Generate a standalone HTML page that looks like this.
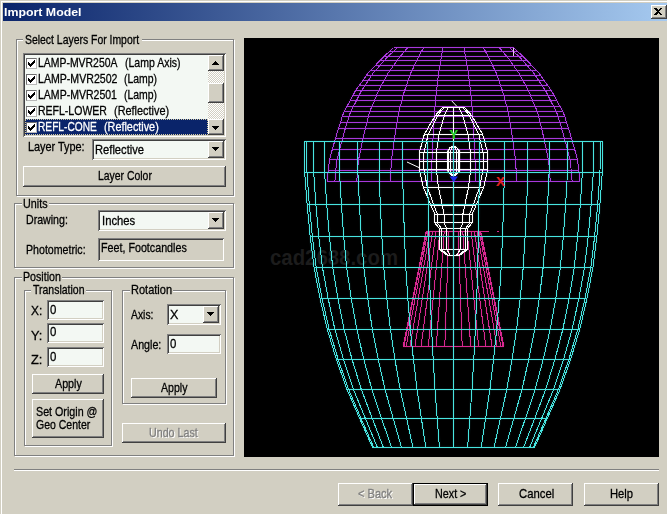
<!DOCTYPE html>
<html lang="en"><head><meta charset="utf-8"><title>Import Model</title><style>
html,body{margin:0;padding:0}
body{width:667px;height:514px;overflow:hidden;background:#d2cfc2;position:relative;font-family:"Liberation Sans",sans-serif;font-size:13px;color:#000}
.abs,.t,.grp,.gap,.btn,.sunk,.flat{position:absolute}
.t{white-space:pre;transform-origin:0 0;display:block;-webkit-text-stroke:0.3px currentColor}
.t.dis{text-shadow:1.25px 1px 0 #fff}
.grp{border:1px solid #808080;box-shadow:1px 1px 0 #fff, inset 1px 1px 0 #fff}
.gap{height:2px;background:#d2cfc2}
.btn{box-sizing:border-box;background:#d2cfc2;box-shadow:inset -1px -1px 0 #404040, inset 1px 1px 0 #fff, inset -2px -2px 0 #808080, inset 2px 2px 0 #d2cfc2}
.btn.def{border:1px solid #000}
.sunk{box-sizing:border-box;box-shadow:inset 1px 1px 0 #808080, inset -1px -1px 0 #fff, inset 2px 2px 0 #404040, inset -2px -2px 0 #d2cfc2}
.flat{box-sizing:border-box;box-shadow:inset 1px 1px 0 #808080, inset -1px -1px 0 #fff}
</style></head><body>
<div class="abs" style="left:1px;top:1px;width:666px;height:1px;background:#fff"></div>
<div class="abs" style="left:1px;top:1px;width:1px;height:513px;background:#fff"></div>
<div class="abs" style="left:3px;top:3px;width:666px;height:18px;background:linear-gradient(90deg,#0a246a,#a6caf0)"></div>
<div class="btn" style="left:651px;top:5px;width:16px;height:14px"></div>
<svg class="abs" style="left:654px;top:8px" width="9" height="8" shape-rendering="crispEdges"><path d="M0 0H2L4 2L6 0H8L5 3.5L8 7H6L4 5L2 7H0L3 3.5Z" fill="#000"/></svg>
<div class="grp" style="left:16px;top:39px;width:216px;height:155px"></div><div class="gap" style="left:22.5px;top:39px;width:119.0px"></div>
<div class="sunk" style="left:23px;top:53px;width:203px;height:84px;background:#f3f8f3"></div>
<div class="abs" style="left:25px;top:119px;width:183px;height:16px;background:#0a246a;outline:1px dotted #d0c8a0;outline-offset:-1px"></div>
<div class="abs" style="left:26px;top:58px;width:11px;height:11px;box-sizing:border-box;border:1px solid;border-color:#707070 #b8b8b8 #b8b8b8 #707070;background:#fff"></div>
<svg class="abs" style="left:28px;top:60px" width="7" height="7" shape-rendering="crispEdges"><path d="M0 2V5L2 7L7 2V-1L2 4Z" fill="#000"/></svg>
<div class="abs" style="left:26px;top:74px;width:11px;height:11px;box-sizing:border-box;border:1px solid;border-color:#707070 #b8b8b8 #b8b8b8 #707070;background:#fff"></div>
<svg class="abs" style="left:28px;top:76px" width="7" height="7" shape-rendering="crispEdges"><path d="M0 2V5L2 7L7 2V-1L2 4Z" fill="#000"/></svg>
<div class="abs" style="left:26px;top:90px;width:11px;height:11px;box-sizing:border-box;border:1px solid;border-color:#707070 #b8b8b8 #b8b8b8 #707070;background:#fff"></div>
<svg class="abs" style="left:28px;top:92px" width="7" height="7" shape-rendering="crispEdges"><path d="M0 2V5L2 7L7 2V-1L2 4Z" fill="#000"/></svg>
<div class="abs" style="left:26px;top:106px;width:11px;height:11px;box-sizing:border-box;border:1px solid;border-color:#707070 #b8b8b8 #b8b8b8 #707070;background:#fff"></div>
<svg class="abs" style="left:28px;top:108px" width="7" height="7" shape-rendering="crispEdges"><path d="M0 2V5L2 7L7 2V-1L2 4Z" fill="#000"/></svg>
<div class="abs" style="left:26px;top:122px;width:11px;height:11px;box-sizing:border-box;border:1px solid;border-color:#707070 #b8b8b8 #b8b8b8 #707070;background:#fff"></div>
<svg class="abs" style="left:28px;top:124px" width="7" height="7" shape-rendering="crispEdges"><path d="M0 2V5L2 7L7 2V-1L2 4Z" fill="#000"/></svg>
<div class="abs" style="left:208px;top:55px;width:16px;height:80px;background:repeating-conic-gradient(#fff 0 25%,#d2cfc2 0 50%) 0 0/2px 2px"></div>
<div class="btn" style="left:208px;top:55px;width:16px;height:16px"></div>
<svg class="abs" style="left:212px;top:61px" width="7" height="4" shape-rendering="crispEdges"><path d="M0 4H7L3.5 0Z" fill="#000"/></svg>
<div class="btn" style="left:208px;top:119px;width:16px;height:16px"></div>
<svg class="abs" style="left:212px;top:126px" width="7" height="4" shape-rendering="crispEdges"><path d="M0 0H7L3.5 4Z" fill="#000"/></svg>
<div class="btn" style="left:208px;top:83px;width:16px;height:20px"></div>
<div class="sunk" style="left:92px;top:139px;width:134px;height:21px;background:#f3f8f3"></div><div class="btn" style="left:208px;top:141px;width:16px;height:17px"></div><svg class="abs" style="left:212px;top:147px" width="7" height="4" shape-rendering="crispEdges"><path d="M0 0H7L3.5 4Z" fill="#000"/></svg>
<div class="btn" style="left:23px;top:166px;width:203px;height:21px"></div>
<div class="grp" style="left:14px;top:203px;width:218px;height:63px"></div><div class="gap" style="left:21.5px;top:203px;width:27.5px"></div>
<div class="sunk" style="left:98px;top:210px;width:128px;height:21px;background:#f3f8f3"></div><div class="btn" style="left:208px;top:212px;width:16px;height:17px"></div><svg class="abs" style="left:212px;top:218px" width="7" height="4" shape-rendering="crispEdges"><path d="M0 0H7L3.5 4Z" fill="#000"/></svg>
<div class="sunk" style="left:98px;top:238px;width:126px;height:23px;background:#d2cfc2"></div>
<div class="grp" style="left:14px;top:277px;width:218px;height:177px"></div><div class="gap" style="left:21.5px;top:277px;width:40.5px"></div>
<div class="grp" style="left:24px;top:290px;width:86px;height:154px"></div><div class="gap" style="left:31.0px;top:290px;width:55.0px"></div>
<div class="grp" style="left:122px;top:290px;width:102px;height:112px"></div><div class="gap" style="left:129.5px;top:290px;width:43.5px"></div>
<div class="sunk" style="left:47px;top:300px;width:57px;height:20px;background:#f3f8f3"></div>
<div class="sunk" style="left:47px;top:323px;width:57px;height:20px;background:#f3f8f3"></div>
<div class="sunk" style="left:47px;top:347px;width:57px;height:20px;background:#f3f8f3"></div>
<div class="btn" style="left:32px;top:374px;width:72px;height:20px"></div>
<div class="btn" style="left:32px;top:399px;width:72px;height:39px"></div>
<div class="sunk" style="left:167px;top:304px;width:54px;height:21px;background:#f3f8f3"></div><div class="btn" style="left:203px;top:306px;width:16px;height:17px"></div><svg class="abs" style="left:207px;top:312px" width="7" height="4" shape-rendering="crispEdges"><path d="M0 0H7L3.5 4Z" fill="#000"/></svg>
<div class="sunk" style="left:167px;top:334px;width:54px;height:20px;background:#f3f8f3"></div>
<div class="btn" style="left:131px;top:378px;width:86px;height:20px"></div>
<div class="btn" style="left:122px;top:423px;width:104px;height:20px"></div>
<div class="abs" style="left:14px;top:469px;width:645px;height:1px;background:#808080"></div>
<div class="abs" style="left:14px;top:470px;width:645px;height:1px;background:#fff"></div>
<div class="btn" style="left:338px;top:483px;width:75px;height:23px"></div>
<div class="btn def" style="left:413px;top:483px;width:75px;height:23px"></div>
<div class="btn" style="left:498px;top:483px;width:75px;height:23px"></div>
<div class="btn" style="left:584px;top:483px;width:75px;height:23px"></div>
<svg class="abs" style="left:244px;top:38px" width="415" height="419" viewBox="244 38 415 419" shape-rendering="crispEdges">
<rect x="244" y="38" width="415" height="419" fill="#000"/>
<text x="270" y="265" font-family="Liberation Sans, sans-serif" font-weight="bold" font-size="22" fill="#1c1c1c" textLength="128" lengthAdjust="spacingAndGlyphs">cad2688.com</text>
<path d="M393.5 47.8H513.5M389.3 51.6H517.7M384.2 56.3H522.8M379.7 60.7H527.3M375.3 65.5H531.7M370.6 70.5H536.4M366.4 75.4H540.6M363.0 80.4H544.0M359.3 85.5H547.7M355.5 90.7H551.5M352.9 95.6H554.1M350.1 100.8H556.9M346.8 106.7H560.2M344.2 111.3H562.8M342.3 116.4H564.7M340.5 122.3H566.5M338.4 128.5H568.6M335.5 138.6H571.5M332.3 149.4H574.7M329.6 159.5H577.4M328.2 170.0H578.8M327.3 181.0H579.7M393.5 47.8L386.0 54.6L380.8 59.5L378.2 62.4L370.3 70.8L367.7 73.4L361.9 82.0L355.6 90.6L354.7 92.2L349.3 102.4L344.2 111.2L342.3 116.4L340.5 122.3L338.4 128.5L335.5 138.5L332.3 149.4L329.6 159.5L328.2 170.0L327.3 181.0M397.1 47.8L390.1 54.6L385.2 59.5L382.7 62.4L375.3 70.8L372.9 73.4L367.4 82.0L361.5 90.6L360.7 92.2L355.6 102.4L350.8 111.2L349.0 116.4L347.3 122.3L345.3 128.5L342.6 138.5L339.6 149.4L337.1 159.5L335.8 170.0L334.9 181.0M407.5 47.8L401.8 54.6L397.8 59.5L395.8 62.4L389.8 70.8L387.8 73.4L383.3 82.0L378.5 90.6L377.8 92.2L373.7 102.4L369.8 111.2L368.3 116.4L366.9 122.3L365.3 128.5L363.1 138.5L360.7 149.4L358.6 159.5L357.5 170.0L356.8 181.0M423.5 47.8L419.8 54.6L417.1 59.5L415.9 62.4L411.9 70.8L410.6 73.4L407.7 82.0L404.6 90.6L404.1 92.2L401.4 102.4L398.9 111.2L397.9 116.4L397.0 122.3L395.9 128.5L394.5 138.5L392.9 149.4L391.6 159.5L390.9 170.0L390.4 181.0M443.1 47.8L441.8 54.6L440.9 59.5L440.4 62.4L439.1 70.8L438.6 73.4L437.6 82.0L436.5 90.6L436.3 92.2L435.4 102.4L434.5 111.2L434.2 116.4L433.9 122.3L433.5 128.5L433.0 138.5L432.5 149.4L432.0 159.5L431.7 170.0L431.6 181.0M463.9 47.8L465.2 54.6L466.1 59.5L466.6 62.4L467.9 70.8L468.4 73.4L469.4 82.0L470.5 90.6L470.7 92.2L471.6 102.4L472.5 111.2L472.8 116.4L473.1 122.3L473.5 128.5L474.0 138.5L474.5 149.4L475.0 159.5L475.3 170.0L475.4 181.0M483.5 47.8L487.2 54.6L489.9 59.5L491.1 62.4L495.1 70.8L496.4 73.4L499.3 82.0L502.4 90.6L502.9 92.2L505.6 102.4L508.1 111.2L509.1 116.4L510.0 122.3L511.1 128.5L512.5 138.5L514.1 149.4L515.5 159.5L516.1 170.0L516.6 181.0M499.5 47.8L505.2 54.6L509.2 59.5L511.2 62.4L517.2 70.8L519.2 73.4L523.7 82.0L528.5 90.6L529.2 92.2L533.3 102.4L537.2 111.2L538.7 116.4L540.1 122.3L541.7 128.5L543.9 138.5L546.3 149.4L548.4 159.5L549.5 170.0L550.2 181.0M509.9 47.8L516.9 54.6L521.8 59.5L524.3 62.4L531.7 70.8L534.1 73.4L539.6 82.0L545.5 90.6L546.3 92.2L551.4 102.4L556.2 111.2L558.0 116.4L559.7 122.3L561.7 128.5L564.4 138.5L567.4 149.4L569.9 159.5L571.2 170.0L572.1 181.0M513.5 47.8L521.0 54.6L526.2 59.5L528.8 62.4L536.7 70.8L539.3 73.4L545.1 82.0L551.4 90.6L552.3 92.2L557.7 102.4L562.8 111.2L564.7 116.4L566.5 122.3L568.6 128.5L571.5 138.5L574.7 149.4L577.4 159.5L578.8 170.0L579.7 181.0" stroke="#a838dc" stroke-width="3" stroke-opacity="0.07" fill="none" shape-rendering="auto"/><path d="M393.5 47.8H513.5M389.3 51.6H517.7M384.2 56.3H522.8M379.7 60.7H527.3M375.3 65.5H531.7M370.6 70.5H536.4M366.4 75.4H540.6M363.0 80.4H544.0M359.3 85.5H547.7M355.5 90.7H551.5M352.9 95.6H554.1M350.1 100.8H556.9M346.8 106.7H560.2M344.2 111.3H562.8M342.3 116.4H564.7M340.5 122.3H566.5M338.4 128.5H568.6M335.5 138.6H571.5M332.3 149.4H574.7M329.6 159.5H577.4M328.2 170.0H578.8M327.3 181.0H579.7M393.5 47.8L386.0 54.6L380.8 59.5L378.2 62.4L370.3 70.8L367.7 73.4L361.9 82.0L355.6 90.6L354.7 92.2L349.3 102.4L344.2 111.2L342.3 116.4L340.5 122.3L338.4 128.5L335.5 138.5L332.3 149.4L329.6 159.5L328.2 170.0L327.3 181.0M397.1 47.8L390.1 54.6L385.2 59.5L382.7 62.4L375.3 70.8L372.9 73.4L367.4 82.0L361.5 90.6L360.7 92.2L355.6 102.4L350.8 111.2L349.0 116.4L347.3 122.3L345.3 128.5L342.6 138.5L339.6 149.4L337.1 159.5L335.8 170.0L334.9 181.0M407.5 47.8L401.8 54.6L397.8 59.5L395.8 62.4L389.8 70.8L387.8 73.4L383.3 82.0L378.5 90.6L377.8 92.2L373.7 102.4L369.8 111.2L368.3 116.4L366.9 122.3L365.3 128.5L363.1 138.5L360.7 149.4L358.6 159.5L357.5 170.0L356.8 181.0M423.5 47.8L419.8 54.6L417.1 59.5L415.9 62.4L411.9 70.8L410.6 73.4L407.7 82.0L404.6 90.6L404.1 92.2L401.4 102.4L398.9 111.2L397.9 116.4L397.0 122.3L395.9 128.5L394.5 138.5L392.9 149.4L391.6 159.5L390.9 170.0L390.4 181.0M443.1 47.8L441.8 54.6L440.9 59.5L440.4 62.4L439.1 70.8L438.6 73.4L437.6 82.0L436.5 90.6L436.3 92.2L435.4 102.4L434.5 111.2L434.2 116.4L433.9 122.3L433.5 128.5L433.0 138.5L432.5 149.4L432.0 159.5L431.7 170.0L431.6 181.0M463.9 47.8L465.2 54.6L466.1 59.5L466.6 62.4L467.9 70.8L468.4 73.4L469.4 82.0L470.5 90.6L470.7 92.2L471.6 102.4L472.5 111.2L472.8 116.4L473.1 122.3L473.5 128.5L474.0 138.5L474.5 149.4L475.0 159.5L475.3 170.0L475.4 181.0M483.5 47.8L487.2 54.6L489.9 59.5L491.1 62.4L495.1 70.8L496.4 73.4L499.3 82.0L502.4 90.6L502.9 92.2L505.6 102.4L508.1 111.2L509.1 116.4L510.0 122.3L511.1 128.5L512.5 138.5L514.1 149.4L515.5 159.5L516.1 170.0L516.6 181.0M499.5 47.8L505.2 54.6L509.2 59.5L511.2 62.4L517.2 70.8L519.2 73.4L523.7 82.0L528.5 90.6L529.2 92.2L533.3 102.4L537.2 111.2L538.7 116.4L540.1 122.3L541.7 128.5L543.9 138.5L546.3 149.4L548.4 159.5L549.5 170.0L550.2 181.0M509.9 47.8L516.9 54.6L521.8 59.5L524.3 62.4L531.7 70.8L534.1 73.4L539.6 82.0L545.5 90.6L546.3 92.2L551.4 102.4L556.2 111.2L558.0 116.4L559.7 122.3L561.7 128.5L564.4 138.5L567.4 149.4L569.9 159.5L571.2 170.0L572.1 181.0M513.5 47.8L521.0 54.6L526.2 59.5L528.8 62.4L536.7 70.8L539.3 73.4L545.1 82.0L551.4 90.6L552.3 92.2L557.7 102.4L562.8 111.2L564.7 116.4L566.5 122.3L568.6 128.5L571.5 138.5L574.7 149.4L577.4 159.5L578.8 170.0L579.7 181.0" stroke="#a838dc" stroke-width="1" fill="none"/>
<path d="M513.5 48V56" stroke="#e8c8f0" stroke-width="1"/>
<path d="M426.2 231.5H480.8M403.1 346.5H503.9M426.2 231.5L403.1 346.5M426.6 231.5L403.9 346.5M427.8 231.5L406.1 346.5M429.9 231.5L409.9 346.5M432.6 231.5L414.9 346.5M436.0 231.5L421.1 346.5M439.9 231.5L428.3 346.5M444.2 231.5L436.3 346.5M448.8 231.5L444.8 346.5M453.5 231.5L453.5 346.5M458.2 231.5L462.2 346.5M462.8 231.5L470.7 346.5M467.1 231.5L478.7 346.5M471.0 231.5L485.9 346.5M474.4 231.5L492.1 346.5M477.1 231.5L497.1 346.5M479.2 231.5L500.9 346.5M480.4 231.5L503.1 346.5M480.8 231.5L503.9 346.5" stroke="#d82890" stroke-width="3" stroke-opacity="0.07" fill="none" shape-rendering="auto"/><path d="M426.2 231.5H480.8M403.1 346.5H503.9M426.2 231.5L403.1 346.5M426.6 231.5L403.9 346.5M427.8 231.5L406.1 346.5M429.9 231.5L409.9 346.5M432.6 231.5L414.9 346.5M436.0 231.5L421.1 346.5M439.9 231.5L428.3 346.5M444.2 231.5L436.3 346.5M448.8 231.5L444.8 346.5M453.5 231.5L453.5 346.5M458.2 231.5L462.2 346.5M462.8 231.5L470.7 346.5M467.1 231.5L478.7 346.5M471.0 231.5L485.9 346.5M474.4 231.5L492.1 346.5M477.1 231.5L497.1 346.5M479.2 231.5L500.9 346.5M480.4 231.5L503.1 346.5M480.8 231.5L503.9 346.5" stroke="#d82890" stroke-width="1" fill="none"/>
<path d="M481 231.5H489M497 231.5H499" stroke="#d82890" stroke-width="1"/>
<path d="M442.8 107.3H464.2M435.3 115.5H471.7M424.3 134.5H482.7M419.3 152.8H487.7M419.3 161.2H487.7M419.3 169.5H487.7M423.3 187.1H483.7M431.2 205.9H475.8M434.8 214.1H472.2M434.8 222.9H472.2M439.2 228.1H467.8M439.2 249.2H467.8M447.7 255.6H459.3M442.8 107.3L435.3 115.5L424.3 134.5L419.3 152.8L419.3 161.2L419.3 169.5L423.3 187.1L431.2 205.9L434.8 214.1L434.8 222.9L439.2 228.1L439.2 249.2L447.7 255.6M444.2 107.3L437.7 115.5L428.2 134.5L423.9 152.8L423.9 161.2L423.9 169.5L427.3 187.1L434.2 205.9L437.3 214.1L437.3 222.9L441.1 228.1L441.1 249.2L448.5 255.6M448.1 107.3L444.4 115.5L438.9 134.5L436.4 152.8L436.4 161.2L436.4 169.5L438.4 187.1L442.4 205.9L444.1 214.1L444.1 222.9L446.4 228.1L446.4 249.2L450.6 255.6M453.5 107.3L453.5 115.5L453.5 134.5L453.5 152.8L453.5 161.2L453.5 169.5L453.5 187.1L453.5 205.9L453.5 214.1L453.5 222.9L453.5 228.1L453.5 249.2L453.5 255.6M458.9 107.3L462.6 115.5L468.1 134.5L470.6 152.8L470.6 161.2L470.6 169.5L468.6 187.1L464.6 205.9L462.9 214.1L462.9 222.9L460.6 228.1L460.6 249.2L456.4 255.6M462.8 107.3L469.3 115.5L478.8 134.5L483.1 152.8L483.1 161.2L483.1 169.5L479.7 187.1L472.8 205.9L469.7 214.1L469.7 222.9L465.9 228.1L465.9 249.2L458.5 255.6M464.2 107.3L471.7 115.5L482.7 134.5L487.7 152.8L487.7 161.2L487.7 169.5L483.7 187.1L475.8 205.9L472.2 214.1L472.2 222.9L467.8 228.1L467.8 249.2L459.3 255.6" stroke="#ffffff" stroke-width="3" stroke-opacity="0.07" fill="none" shape-rendering="auto"/><path d="M442.8 107.3H464.2M435.3 115.5H471.7M424.3 134.5H482.7M419.3 152.8H487.7M419.3 161.2H487.7M419.3 169.5H487.7M423.3 187.1H483.7M431.2 205.9H475.8M434.8 214.1H472.2M434.8 222.9H472.2M439.2 228.1H467.8M439.2 249.2H467.8M447.7 255.6H459.3M442.8 107.3L435.3 115.5L424.3 134.5L419.3 152.8L419.3 161.2L419.3 169.5L423.3 187.1L431.2 205.9L434.8 214.1L434.8 222.9L439.2 228.1L439.2 249.2L447.7 255.6M444.2 107.3L437.7 115.5L428.2 134.5L423.9 152.8L423.9 161.2L423.9 169.5L427.3 187.1L434.2 205.9L437.3 214.1L437.3 222.9L441.1 228.1L441.1 249.2L448.5 255.6M448.1 107.3L444.4 115.5L438.9 134.5L436.4 152.8L436.4 161.2L436.4 169.5L438.4 187.1L442.4 205.9L444.1 214.1L444.1 222.9L446.4 228.1L446.4 249.2L450.6 255.6M453.5 107.3L453.5 115.5L453.5 134.5L453.5 152.8L453.5 161.2L453.5 169.5L453.5 187.1L453.5 205.9L453.5 214.1L453.5 222.9L453.5 228.1L453.5 249.2L453.5 255.6M458.9 107.3L462.6 115.5L468.1 134.5L470.6 152.8L470.6 161.2L470.6 169.5L468.6 187.1L464.6 205.9L462.9 214.1L462.9 222.9L460.6 228.1L460.6 249.2L456.4 255.6M462.8 107.3L469.3 115.5L478.8 134.5L483.1 152.8L483.1 161.2L483.1 169.5L479.7 187.1L472.8 205.9L469.7 214.1L469.7 222.9L465.9 228.1L465.9 249.2L458.5 255.6M464.2 107.3L471.7 115.5L482.7 134.5L487.7 152.8L487.7 161.2L487.7 169.5L483.7 187.1L475.8 205.9L472.2 214.1L472.2 222.9L467.8 228.1L467.8 249.2L459.3 255.6" stroke="#ffffff" stroke-width="1" fill="none"/>
<path d="M451.7 100.8L456.9 106.4M407 162L419.3 167.7" stroke="#fff" stroke-width="1" shape-rendering="auto"/>
<path d="M452.0 146.5H455.0M452.0 175.3H455.0M452.0 146.5L449.2 148.3L447.9 151.0L447.9 171.0L449.2 173.6L452.0 175.3M452.2 146.5L449.8 148.3L448.7 151.0L448.7 171.0L449.8 173.6L452.2 175.3M452.8 146.5L451.4 148.3L450.7 151.0L450.7 171.0L451.4 173.6L452.8 175.3M453.5 146.5L453.5 148.3L453.5 151.0L453.5 171.0L453.5 173.6L453.5 175.3M454.2 146.5L455.6 148.3L456.3 151.0L456.3 171.0L455.6 173.6L454.2 175.3M454.8 146.5L457.2 148.3L458.3 151.0L458.3 171.0L457.2 173.6L454.8 175.3M455.0 146.5L457.8 148.3L459.1 151.0L459.1 171.0L457.8 173.6L455.0 175.3" stroke="#ffffff" stroke-width="3" stroke-opacity="0.07" fill="none" shape-rendering="auto"/><path d="M452.0 146.5H455.0M452.0 175.3H455.0M452.0 146.5L449.2 148.3L447.9 151.0L447.9 171.0L449.2 173.6L452.0 175.3M452.2 146.5L449.8 148.3L448.7 151.0L448.7 171.0L449.8 173.6L452.2 175.3M452.8 146.5L451.4 148.3L450.7 151.0L450.7 171.0L451.4 173.6L452.8 175.3M453.5 146.5L453.5 148.3L453.5 151.0L453.5 171.0L453.5 173.6L453.5 175.3M454.2 146.5L455.6 148.3L456.3 151.0L456.3 171.0L455.6 173.6L454.2 175.3M454.8 146.5L457.2 148.3L458.3 151.0L458.3 171.0L457.2 173.6L454.8 175.3M455.0 146.5L457.8 148.3L459.1 151.0L459.1 171.0L457.8 173.6L455.0 175.3" stroke="#ffffff" stroke-width="1" fill="none"/>
<path d="M448.2 150V172M459.4 150V172" stroke="#fff" stroke-width="1.4" shape-rendering="auto"/>
<path d="M304.5 141.5H602.5M304.7 172.4H602.3M307.1 204.6H599.9M310.2 236.7H596.8M314.1 267.7H592.9M320.0 298.3H587.0M327.2 329.1H579.8M336.3 359.2H570.7M347.0 389.4H560.0M359.7 418.5H547.3M372.4 447.2H534.6M304.5 141.5L304.7 172.4L307.1 204.6L310.2 236.7L314.1 267.7L320.0 298.3L327.2 329.1L336.3 359.2L347.0 389.4L359.7 418.5L372.4 447.2M306.8 141.5L307.0 172.4L309.3 204.6L312.4 236.7L316.2 267.7L322.0 298.3L329.1 329.1L338.1 359.2L348.6 389.4L361.1 418.5L373.6 447.2M313.5 141.5L313.7 172.4L315.9 204.6L318.8 236.7L322.5 267.7L328.1 298.3L334.8 329.1L343.4 359.2L353.4 389.4L365.4 418.5L377.3 447.2M324.5 141.5L324.6 172.4L326.7 204.6L329.4 236.7L332.8 267.7L337.9 298.3L344.1 329.1L352.0 359.2L361.3 389.4L372.3 418.5L383.3 447.2M339.4 141.5L339.5 172.4L341.4 204.6L343.7 236.7L346.7 267.7L351.2 298.3L356.8 329.1L363.7 359.2L371.9 389.4L381.6 418.5L391.4 447.2M357.7 141.5L357.9 172.4L359.4 204.6L361.4 236.7L363.9 267.7L367.7 298.3L372.3 329.1L378.2 359.2L385.0 389.4L393.2 418.5L401.4 447.2M379.0 141.5L379.1 172.4L380.3 204.6L381.9 236.7L383.8 267.7L386.8 298.3L390.4 329.1L394.9 359.2L400.2 389.4L406.6 418.5L412.9 447.2M402.5 141.5L402.6 172.4L403.4 204.6L404.5 236.7L405.8 267.7L407.8 298.3L410.3 329.1L413.4 359.2L417.1 389.4L421.4 418.5L425.8 447.2M427.6 141.5L427.7 172.4L428.1 204.6L428.6 236.7L429.3 267.7L430.3 298.3L431.6 329.1L433.2 359.2L435.0 389.4L437.2 418.5L439.4 447.2M453.5 141.5L453.5 172.4L453.5 204.6L453.5 236.7L453.5 267.7L453.5 298.3L453.5 329.1L453.5 359.2L453.5 389.4L453.5 418.5L453.5 447.2M479.4 141.5L479.3 172.4L478.9 204.6L478.4 236.7L477.7 267.7L476.7 298.3L475.4 329.1L473.8 359.2L472.0 389.4L469.8 418.5L467.6 447.2M504.5 141.5L504.4 172.4L503.6 204.6L502.5 236.7L501.2 267.7L499.2 298.3L496.7 329.1L493.6 359.2L489.9 389.4L485.6 418.5L481.2 447.2M528.0 141.5L527.9 172.4L526.7 204.6L525.1 236.7L523.2 267.7L520.2 298.3L516.6 329.1L512.1 359.2L506.8 389.4L500.4 418.5L494.1 447.2M549.3 141.5L549.1 172.4L547.6 204.6L545.6 236.7L543.1 267.7L539.3 298.3L534.7 329.1L528.8 359.2L522.0 389.4L513.8 418.5L505.6 447.2M567.6 141.5L567.5 172.4L565.6 204.6L563.3 236.7L560.3 267.7L555.8 298.3L550.2 329.1L543.3 359.2L535.1 389.4L525.4 418.5L515.6 447.2M582.5 141.5L582.4 172.4L580.3 204.6L577.6 236.7L574.2 267.7L569.1 298.3L562.9 329.1L555.0 359.2L545.7 389.4L534.7 418.5L523.7 447.2M593.5 141.5L593.3 172.4L591.1 204.6L588.2 236.7L584.5 267.7L578.9 298.3L572.2 329.1L563.6 359.2L553.6 389.4L541.6 418.5L529.7 447.2M600.2 141.5L600.0 172.4L597.7 204.6L594.6 236.7L590.8 267.7L585.0 298.3L577.9 329.1L568.9 359.2L558.4 389.4L545.9 418.5L533.4 447.2M602.5 141.5L602.3 172.4L599.9 204.6L596.8 236.7L592.9 267.7L587.0 298.3L579.8 329.1L570.7 359.2L560.0 389.4L547.3 418.5L534.6 447.2" stroke="#48e4e0" stroke-width="3" stroke-opacity="0.07" fill="none" shape-rendering="auto"/><path d="M304.5 141.5H602.5M304.7 172.4H602.3M307.1 204.6H599.9M310.2 236.7H596.8M314.1 267.7H592.9M320.0 298.3H587.0M327.2 329.1H579.8M336.3 359.2H570.7M347.0 389.4H560.0M359.7 418.5H547.3M372.4 447.2H534.6M304.5 141.5L304.7 172.4L307.1 204.6L310.2 236.7L314.1 267.7L320.0 298.3L327.2 329.1L336.3 359.2L347.0 389.4L359.7 418.5L372.4 447.2M306.8 141.5L307.0 172.4L309.3 204.6L312.4 236.7L316.2 267.7L322.0 298.3L329.1 329.1L338.1 359.2L348.6 389.4L361.1 418.5L373.6 447.2M313.5 141.5L313.7 172.4L315.9 204.6L318.8 236.7L322.5 267.7L328.1 298.3L334.8 329.1L343.4 359.2L353.4 389.4L365.4 418.5L377.3 447.2M324.5 141.5L324.6 172.4L326.7 204.6L329.4 236.7L332.8 267.7L337.9 298.3L344.1 329.1L352.0 359.2L361.3 389.4L372.3 418.5L383.3 447.2M339.4 141.5L339.5 172.4L341.4 204.6L343.7 236.7L346.7 267.7L351.2 298.3L356.8 329.1L363.7 359.2L371.9 389.4L381.6 418.5L391.4 447.2M357.7 141.5L357.9 172.4L359.4 204.6L361.4 236.7L363.9 267.7L367.7 298.3L372.3 329.1L378.2 359.2L385.0 389.4L393.2 418.5L401.4 447.2M379.0 141.5L379.1 172.4L380.3 204.6L381.9 236.7L383.8 267.7L386.8 298.3L390.4 329.1L394.9 359.2L400.2 389.4L406.6 418.5L412.9 447.2M402.5 141.5L402.6 172.4L403.4 204.6L404.5 236.7L405.8 267.7L407.8 298.3L410.3 329.1L413.4 359.2L417.1 389.4L421.4 418.5L425.8 447.2M427.6 141.5L427.7 172.4L428.1 204.6L428.6 236.7L429.3 267.7L430.3 298.3L431.6 329.1L433.2 359.2L435.0 389.4L437.2 418.5L439.4 447.2M453.5 141.5L453.5 172.4L453.5 204.6L453.5 236.7L453.5 267.7L453.5 298.3L453.5 329.1L453.5 359.2L453.5 389.4L453.5 418.5L453.5 447.2M479.4 141.5L479.3 172.4L478.9 204.6L478.4 236.7L477.7 267.7L476.7 298.3L475.4 329.1L473.8 359.2L472.0 389.4L469.8 418.5L467.6 447.2M504.5 141.5L504.4 172.4L503.6 204.6L502.5 236.7L501.2 267.7L499.2 298.3L496.7 329.1L493.6 359.2L489.9 389.4L485.6 418.5L481.2 447.2M528.0 141.5L527.9 172.4L526.7 204.6L525.1 236.7L523.2 267.7L520.2 298.3L516.6 329.1L512.1 359.2L506.8 389.4L500.4 418.5L494.1 447.2M549.3 141.5L549.1 172.4L547.6 204.6L545.6 236.7L543.1 267.7L539.3 298.3L534.7 329.1L528.8 359.2L522.0 389.4L513.8 418.5L505.6 447.2M567.6 141.5L567.5 172.4L565.6 204.6L563.3 236.7L560.3 267.7L555.8 298.3L550.2 329.1L543.3 359.2L535.1 389.4L525.4 418.5L515.6 447.2M582.5 141.5L582.4 172.4L580.3 204.6L577.6 236.7L574.2 267.7L569.1 298.3L562.9 329.1L555.0 359.2L545.7 389.4L534.7 418.5L523.7 447.2M593.5 141.5L593.3 172.4L591.1 204.6L588.2 236.7L584.5 267.7L578.9 298.3L572.2 329.1L563.6 359.2L553.6 389.4L541.6 418.5L529.7 447.2M600.2 141.5L600.0 172.4L597.7 204.6L594.6 236.7L590.8 267.7L585.0 298.3L577.9 329.1L568.9 359.2L558.4 389.4L545.9 418.5L533.4 447.2M602.5 141.5L602.3 172.4L599.9 204.6L596.8 236.7L592.9 267.7L587.0 298.3L579.8 329.1L570.7 359.2L560.0 389.4L547.3 418.5L534.6 447.2" stroke="#48e4e0" stroke-width="1" fill="none"/>
<path d="M449.5 176.5H458L453.8 182Z" fill="#1828e8" shape-rendering="auto"/>
<text x="449.6" y="139" font-family="Liberation Mono, monospace" font-weight="bold" font-size="13" fill="#28d028" textLength="8.5" lengthAdjust="spacingAndGlyphs">Y</text>
<text x="496" y="186" font-family="Liberation Mono, monospace" font-weight="bold" font-size="13" fill="#e02020" textLength="9" lengthAdjust="spacingAndGlyphs">X</text>
</svg>
<div id="txt" class="abs" style="left:0;top:0;width:667px;height:514px;will-change:transform">
<span class="t" style="left:4.19px;top:5.52px;font-size:11.5px;line-height:13px;transform:scaleX(1.0742);color:#fff;font-weight:bold;-webkit-text-stroke:0;">Import Model</span>
<span class="t" style="left:25.00px;top:32.00px;font-size:13.0px;line-height:15px;transform:scaleX(0.8014);color:#000;">Select Layers For Import</span>
<span class="t" style="left:38.00px;top:55.00px;font-size:13.0px;line-height:15px;transform:scaleX(0.8031);color:#000;">LAMP-MVR250A</span>
<span class="t" style="left:124.69px;top:55.00px;font-size:13.0px;line-height:15px;transform:scaleX(0.8090);color:#000;">(Lamp Axis)</span>
<span class="t" style="left:37.99px;top:71.00px;font-size:13.0px;line-height:15px;transform:scaleX(0.8146);color:#000;">LAMP-MVR2502</span>
<span class="t" style="left:123.80px;top:71.00px;font-size:13.0px;line-height:15px;transform:scaleX(0.8025);color:#000;">(Lamp)</span>
<span class="t" style="left:37.99px;top:87.00px;font-size:13.0px;line-height:15px;transform:scaleX(0.8094);color:#000;">LAMP-MVR2501</span>
<span class="t" style="left:123.80px;top:87.00px;font-size:13.0px;line-height:15px;transform:scaleX(0.8025);color:#000;">(Lamp)</span>
<span class="t" style="left:37.99px;top:103.00px;font-size:13.0px;line-height:15px;transform:scaleX(0.8084);color:#000;">REFL-LOWER</span>
<span class="t" style="left:113.67px;top:103.00px;font-size:13.0px;line-height:15px;transform:scaleX(0.8389);color:#000;">(Reflective)</span>
<span class="t" style="left:38.02px;top:119.00px;font-size:13.0px;line-height:15px;transform:scaleX(0.7823);color:#fff;">REFL-CONE</span>
<span class="t" style="left:103.88px;top:119.00px;font-size:13.0px;line-height:15px;transform:scaleX(0.8327);color:#fff;">(Reflective)</span>
<span class="t" style="left:27.56px;top:139.00px;font-size:13.0px;line-height:15px;transform:scaleX(0.8366);color:#000;">Layer Type:</span>
<span class="t" style="left:95.44px;top:142.00px;font-size:13.0px;line-height:15px;transform:scaleX(0.8595);color:#000;">Reflective</span>
<span class="t" style="left:97.70px;top:168.00px;font-size:13.0px;line-height:15px;transform:scaleX(0.8015);color:#000;">Layer Color</span>
<span class="t" style="left:22.77px;top:196.00px;font-size:13.0px;line-height:15px;transform:scaleX(0.8283);color:#000;">Units</span>
<span class="t" style="left:25.68px;top:212.00px;font-size:13.0px;line-height:15px;transform:scaleX(0.8163);color:#000;">Drawing:</span>
<span class="t" style="left:101.52px;top:213.00px;font-size:13.0px;line-height:15px;transform:scaleX(0.8658);color:#000;">Inches</span>
<span class="t" style="left:25.68px;top:242.00px;font-size:13.0px;line-height:15px;transform:scaleX(0.8170);color:#000;">Photometric:</span>
<span class="t" style="left:100.98px;top:240.00px;font-size:13.0px;line-height:15px;transform:scaleX(0.8244);color:#000;">Feet, Footcandles</span>
<span class="t" style="left:22.78px;top:269.00px;font-size:13.0px;line-height:15px;transform:scaleX(0.8202);color:#000;">Position</span>
<span class="t" style="left:33.10px;top:282.00px;font-size:13.0px;line-height:15px;transform:scaleX(0.8064);color:#000;">Translation</span>
<span class="t" style="left:130.85px;top:282.00px;font-size:13.0px;line-height:15px;transform:scaleX(0.8473);color:#000;">Rotation</span>
<span class="t" style="left:31.44px;top:303.00px;font-size:13.0px;line-height:15px;transform:scaleX(0.9143);color:#000;">X:</span>
<span class="t" style="left:31.41px;top:328.00px;font-size:13.0px;line-height:15px;transform:scaleX(0.9846);color:#000;">Y:</span>
<span class="t" style="left:31.41px;top:352.00px;font-size:13.0px;line-height:15px;transform:scaleX(0.9846);color:#000;">Z:</span>
<span class="t" style="left:50.06px;top:302.00px;font-size:13.0px;line-height:15px;transform:scaleX(0.8800);color:#000;">0</span>
<span class="t" style="left:50.06px;top:324.00px;font-size:13.0px;line-height:15px;transform:scaleX(0.8800);color:#000;">0</span>
<span class="t" style="left:50.06px;top:349.00px;font-size:13.0px;line-height:15px;transform:scaleX(0.8800);color:#000;">0</span>
<span class="t" style="left:54.70px;top:376.00px;font-size:13.0px;line-height:15px;transform:scaleX(0.8246);color:#000;">Apply</span>
<span class="t" style="left:35.98px;top:404.00px;font-size:13.0px;line-height:15px;transform:scaleX(0.8234);color:#000;">Set Origin @</span>
<span class="t" style="left:35.99px;top:417.00px;font-size:13.0px;line-height:15px;transform:scaleX(0.8075);color:#000;">Geo Center</span>
<span class="t" style="left:131.00px;top:307.00px;font-size:13.0px;line-height:15px;transform:scaleX(0.7963);color:#000;">Axis:</span>
<span class="t" style="left:170.22px;top:307.00px;font-size:13.0px;line-height:15px;transform:scaleX(0.9677);color:#000;">X</span>
<span class="t" style="left:131.00px;top:337.00px;font-size:13.0px;line-height:15px;transform:scaleX(0.8224);color:#000;">Angle:</span>
<span class="t" style="left:170.06px;top:336.00px;font-size:13.0px;line-height:15px;transform:scaleX(0.8800);color:#000;">0</span>
<span class="t" style="left:161.00px;top:380.00px;font-size:13.0px;line-height:15px;transform:scaleX(0.8123);color:#000;">Apply</span>
<span class="t dis" style="left:148.88px;top:425.00px;font-size:13.0px;line-height:15px;transform:scaleX(0.8223);color:#808080;">Undo Last</span>
<span class="t dis" style="left:357.96px;top:486.00px;font-size:13.0px;line-height:15px;transform:scaleX(0.8510);color:#808080;">&lt; Back</span>
<span class="t" style="left:434.77px;top:486.00px;font-size:13.0px;line-height:15px;transform:scaleX(0.8276);color:#000;">Next &gt;</span>
<span class="t" style="left:518.55px;top:486.00px;font-size:13.0px;line-height:15px;transform:scaleX(0.8697);color:#000;">Cancel</span>
<span class="t" style="left:609.54px;top:486.00px;font-size:13.0px;line-height:15px;transform:scaleX(0.8634);color:#000;">Help</span>
</div>
</body></html>
